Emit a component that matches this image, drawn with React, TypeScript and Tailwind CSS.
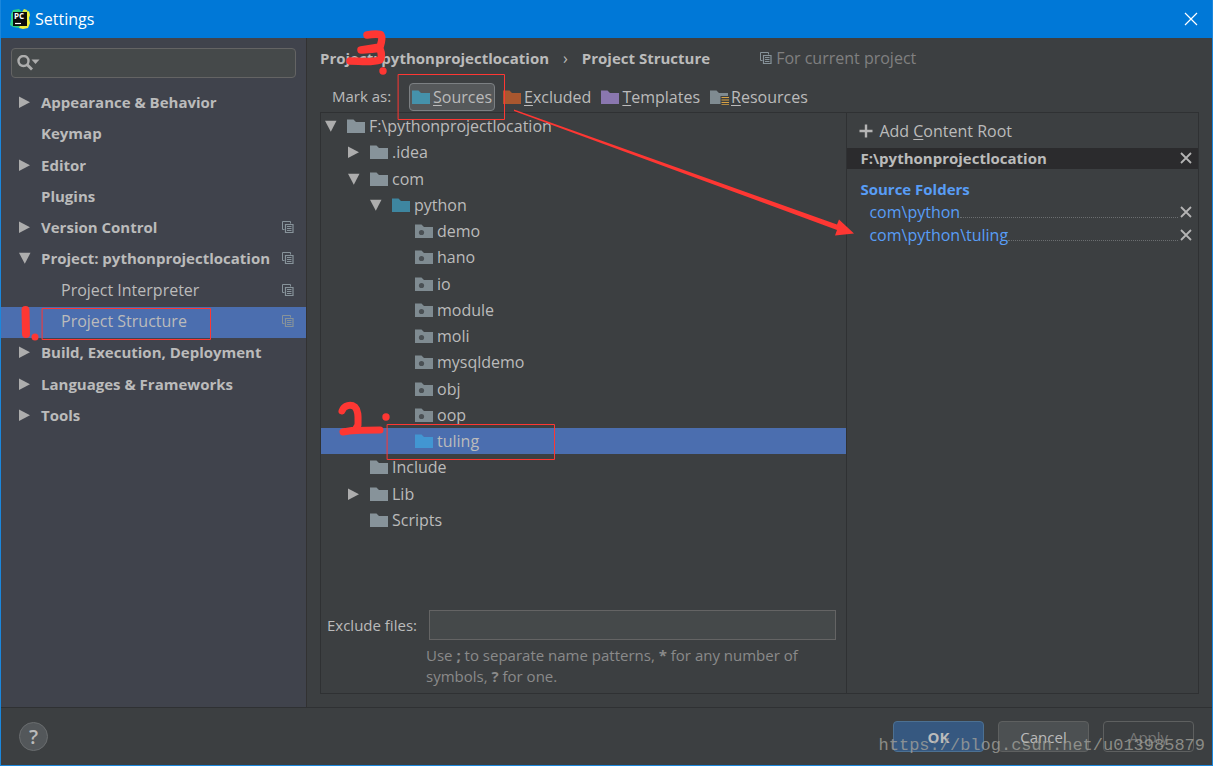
import React from "react";

const FONT = "font-['Open_Sans','Noto_Sans',sans-serif]";
const BOLD = "text-[15px] leading-5 font-bold";

function Arrow({ open }: { open: boolean }) {
  return (
    <svg viewBox="0 0 12 12" className="h-3 w-3 shrink-0" fill="#adadad" aria-hidden="true">
      {open ? <path d="M0 .8h11.500L5.800 11.800z" /> : <path d="M0 .5v11.500L11 6.300z" />}
    </svg>
  );
}

type FolderKind = "plain" | "source" | "selected" | "package" | "toolbar" | "excluded" | "template" | "resource";

const FOLDER_FILL: Record<FolderKind, string> = {
  plain: "#87939a",
  source: "#3e86a0",
  selected: "#4296d2",
  package: "#7f8b91",
  toolbar: "#4592ab",
  excluded: "#a9572f",
  template: "#8a77af",
  resource: "#7f8b91",
};

function Folder({ kind }: { kind: FolderKind }) {
  return (
    <svg viewBox="0 0 19 16" className="h-4 w-[19px] shrink-0" aria-hidden="true">
      <path d="M0 1.500h6.500l2.500 2.500h9v11H0z" fill={FOLDER_FILL[kind]} />
      {kind === "package" && <circle cx="6.500" cy="9.500" r="2.600" fill="#4a5054" />}
      {kind === "resource" && (
        <>
          <path d="M10.500 7H19v9h-8.500z" fill="#3c3f41" />
          <path d="M11.500 8.500H19M11.500 11H19M11.500 13.500H19M11.500 15.700H19" stroke="#d9a343" strokeWidth="1.100" />
        </>
      )}
    </svg>
  );
}

function CopyIcon() {
  return (
    <svg viewBox="0 0 12 12" className="h-3 w-3 shrink-0" fill="none" stroke="#87939a" aria-hidden="true">
      <path d="M2.500 8.500h-2v-8h8v2" />
      <path d="M3.500 3.500h7.500v8H3.500z" strokeWidth="1.200" />
      <path d="M5 5.500h4.500M5 7.500h4.500M5 9.500h4.500" />
    </svg>
  );
}

function CloseIcon() {
  return (
    <svg viewBox="0 0 12 12" className="h-3 w-3" stroke="#b4b4b4" strokeWidth="1.800" aria-hidden="true">
      <path d="M1 1l10 10M11 1L1 11" />
    </svg>
  );
}

function Logo() {
  return (
    <svg viewBox="0 0 20 20" className="h-5 w-5" aria-hidden="true">
      <path d="M1 5L3 1l6-1 3 3v14l-3 2-6-1-3-2 1-5z" fill="#2fd08a" />
      <path d="M10 17h5l2-14 2-1 1 4-1 3 1 5-2 5-5 1-4-1z" fill="#f0f03c" />
      <path d="M12 3h6l-1-2-3-1z" fill="#d4ee4a" />
      <path d="M3 3h14v14H3z" fill="#0c0c0c" />
      <text x="4" y="10" fontSize="8" fontWeight="700" fill="#fff" fontFamily="Open Sans">PC</text>
      <path d="M5 14.500h6" stroke="#fff" strokeWidth="1.200" />
    </svg>
  );
}

type NavItem = { label: string; state?: "open" | "closed"; child?: boolean; copy?: boolean; active?: boolean };

const NAV: NavItem[] = [
  { label: "Appearance & Behavior", state: "closed" },
  { label: "Keymap" },
  { label: "Editor", state: "closed" },
  { label: "Plugins" },
  { label: "Version Control", state: "closed", copy: true },
  { label: "Project: pythonprojectlocation", state: "open", copy: true },
  { label: "Project Interpreter", child: true, copy: true },
  { label: "Project Structure", child: true, copy: true, active: true },
  { label: "Build, Execution, Deployment", state: "closed" },
  { label: "Languages & Frameworks", state: "closed" },
  { label: "Tools", state: "closed" },
];

type TreeNode = { label: string; depth: 0 | 1 | 2 | 3; state?: "open" | "closed"; kind: FolderKind };

const TREE: TreeNode[] = [
  { label: "F:\\pythonprojectlocation", depth: 0, state: "open", kind: "plain" },
  { label: ".idea", depth: 1, state: "closed", kind: "plain" },
  { label: "com", depth: 1, state: "open", kind: "plain" },
  { label: "python", depth: 2, state: "open", kind: "source" },
  { label: "demo", depth: 3, kind: "package" },
  { label: "hano", depth: 3, kind: "package" },
  { label: "io", depth: 3, kind: "package" },
  { label: "module", depth: 3, kind: "package" },
  { label: "moli", depth: 3, kind: "package" },
  { label: "mysqldemo", depth: 3, kind: "package" },
  { label: "obj", depth: 3, kind: "package" },
  { label: "oop", depth: 3, kind: "package" },
  { label: "tuling", depth: 3, kind: "selected" },
  { label: "Include", depth: 1, kind: "plain" },
  { label: "Lib", depth: 1, state: "closed", kind: "plain" },
  { label: "Scripts", depth: 1, kind: "plain" },
];

const INDENT = ["pl-1", "pl-[27px]", "pl-[49px]", "pl-[72px]"];

function Mnemonic({ text }: { text: string }) {
  return (
    <span>
      <span className="underline underline-offset-2">{text[0]}</span>
      {text.slice(1)}
    </span>
  );
}

function Sidebar() {
  return (
    <aside className="flex w-[306px] shrink-0 flex-col border-r border-[#323232] bg-[#40434c]">
      <div className="mx-[10px] mt-[10px] flex h-[30px] items-center rounded border border-[#646464] bg-[#45494a] pl-[5px]">
        <svg viewBox="0 0 24 16" className="h-4 w-6 shrink-0" fill="none" aria-hidden="true">
          <circle cx="6.500" cy="6" r="5" stroke="#adadad" strokeWidth="2.400" />
          <path d="M10 9.500l5 5" stroke="#adadad" strokeWidth="2.800" />
          <path d="M14.500 4.500h8l-4 4.500z" fill="#adadad" />
        </svg>
        <input aria-label="Search settings" className="min-w-0 flex-1 bg-transparent px-1 outline-none" />
      </div>
      <nav className="mt-[10px] grid h-[344px] auto-rows-fr">
        {NAV.map((item) => (
          <a
            key={item.label}
            href="#"
            className={`flex items-center pb-[3px] pr-3 ${item.active ? "bg-[#4b6eaf]" : ""}`}
          >
            <span className={`flex shrink-0 pl-[18px] ${item.child ? "w-[60px]" : "w-10"}`}>
              {item.state && <Arrow open={item.state === "open"} />}
            </span>
            <span className={`flex-1 whitespace-nowrap ${item.child ? "" : BOLD}`}>{item.label}</span>
            {item.copy && <CopyIcon />}
          </a>
        ))}
      </nav>
    </aside>
  );
}

function Toolbar() {
  const rest: { label: string; kind: FolderKind }[] = [
    { label: "Excluded", kind: "excluded" },
    { label: "Templates", kind: "template" },
    { label: "Resources", kind: "resource" },
  ];
  return (
    <div className="flex h-[34px] items-end pl-3">
      <span className="w-[77px] whitespace-nowrap pb-[5px] text-[15px] leading-5">Mark as:</span>
      <button className="flex h-7 items-center gap-[2px] rounded border border-[#7c8083] bg-[#55585a] px-[2px]">
        <Folder kind="toolbar" />
        <Mnemonic text="Sources" />
      </button>
      <div className="ml-2 flex h-7 gap-[10px]">
        {rest.map((b) => (
          <button key={b.label} className="flex items-center gap-[2px]">
            <Folder kind={b.kind} />
            <Mnemonic text={b.label} />
          </button>
        ))}
      </div>
    </div>
  );
}

function TreePane() {
  return (
    <div className="flex min-w-0 flex-[526] flex-col border-r border-[#2f3133]">
      <div className="grid h-[420px] auto-rows-fr" role="tree">
        {TREE.map((n) => (
          <div
            key={n.label}
            role="treeitem"
            aria-selected={n.kind === "selected"}
            className={`flex items-center ${INDENT[n.depth]} ${n.kind === "selected" ? "bg-[#4b6eaf]" : ""}`}
          >
            <span className="flex w-[22px] shrink-0">{n.state && <Arrow open={n.state === "open"} />}</span>
            <Folder kind={n.kind} />
            <span className="pl-[3px]">{n.label}</span>
          </div>
        ))}
      </div>
      <div className="mt-auto pb-[6px] text-[15px] leading-5">
        <div className="flex items-center pl-[6px] pr-[10px]">
          <label htmlFor="exclude" className="w-[102px] whitespace-nowrap">Exclude files:</label>
          <input id="exclude" className="h-[30px] min-w-0 flex-1 border border-[#646464] bg-[#45494a] px-2 outline-none" />
        </div>
        <p className="mt-[5px] w-[510px] pl-[105px] leading-[21px] text-[#8a8a8a]">
          Use <b>;</b> to separate name patterns, <b>*</b> for any number of symbols, <b>?</b> for one.
        </p>
      </div>
    </div>
  );
}

function RootsPane() {
  return (
    <div className="min-w-0 flex-[351]">
      <button className="flex h-[35px] items-center gap-[6px] pl-3">
        <svg viewBox="0 0 14 14" className="h-[14px] w-[14px]" stroke="#b4b4b4" strokeWidth="2.400" aria-hidden="true">
          <path d="M7 .5v13M.5 7h13" />
        </svg>
        <span>
          Add <span className="underline underline-offset-2">C</span>ontent Root
        </span>
      </button>
      <div className="flex h-[21px] items-center justify-between bg-[#2b2b2d] pb-px pl-[13px] pr-[6px]">
        <span className={BOLD}>F:\pythonprojectlocation</span>
        <button aria-label="Remove content root"><CloseIcon /></button>
      </div>
      <div className="pl-[13px] pr-[6px] pt-[10px] text-[#589df6]">
        <h3 className={`h-[21px] ${BOLD}`}>Source Folders</h3>
        {["com\\python", "com\\python\\tuling"].map((path) => (
          <div key={path} className="flex h-[23px] items-center pl-[9px]">
            <a href="#">{path}</a>
            <span className="mr-[2px] mt-3 flex-1 border-b border-dotted border-[#6b6e70]" />
            <button aria-label={`Remove ${path}`}><CloseIcon /></button>
          </div>
        ))}
      </div>
    </div>
  );
}

function Annotations() {
  return (
    <svg
      viewBox="0 0 1213 766"
      className="pointer-events-none absolute -left-px top-0 h-[766px] w-[1213px]"
      fill="none"
      stroke="#fe3733"
      strokeLinecap="round"
      strokeLinejoin="round"
      aria-hidden="true"
    >
      <path d="M42.500 308.500h168v31h-168zM398.500 74.500h106v45h-106zM387.500 424.500h167v35h-167z" strokeLinejoin="miter" />
      <path d="M25.500 310l.5 24" strokeWidth="8" />
      <path d="M342 411c2-6 9-7 13-4 4 4 3 12 3 18l-3 5-12 2c8-2 28-2 37-2" strokeWidth="7" />
      <path d="M367 35c6-1 13-1 14 0 2 3 0 9-1 12l-19 3c8 0 17-2 19-1 2 5 2 8 0 11-9 3-20 1-30 1" strokeWidth="7.500" />
      <g fill="#fe3733" stroke="none">
        <circle cx="35" cy="337" r="3.500" />
        <circle cx="386" cy="417" r="3.700" />
        <circle cx="383" cy="71" r="3.700" />
        <path d="M514 109.500l323 115 2-5 15 14-19 2 2-5.500L514 111z" />
      </g>
    </svg>
  );
}

export default function App() {
  return (
    <div className={`relative flex min-h-screen flex-col overflow-hidden border border-t-0 border-[#1b87dc] bg-[#3c3f41] text-[16px] leading-5 text-[#bbbbbb] ${FONT}`}>
      <header className="flex h-[38px] shrink-0 items-center bg-[#0078d7] pl-[9px] pr-[14px] text-white">
        <Logo />
        <span className="ml-[5px] flex-1">Settings</span>
        <button aria-label="Close window">
          <svg viewBox="0 0 14 14" className="h-[14px] w-[14px]" stroke="#fff" strokeWidth="1.200" aria-hidden="true">
            <path d="M1 1l12 12M13 1L1 13" />
          </svg>
        </button>
      </header>

      <div className="flex flex-1">
        <Sidebar />
        <main className="flex min-w-0 flex-1 flex-col pb-[13px] pl-[13px] pr-[13px]">
          <div className="flex h-[39px] items-center whitespace-nowrap">
            <span className={BOLD}>Project: pythonprojectlocation</span>
            <span className="px-[14px]">›</span>
            <span className={BOLD}>Project Structure</span>
            <span className="ml-[50px] flex items-center gap-1 text-[#808080]">
              <CopyIcon />
              For current project
            </span>
          </div>
          <Toolbar />
          <section className="mt-px flex flex-1 border border-[#2f3133]">
            <TreePane />
            <RootsPane />
          </section>
        </main>
      </div>

      <footer className="flex h-[58px] shrink-0 items-center border-t border-[#2f3133] pl-[18px] pr-[18px] text-[15px]">
        <button aria-label="Help" className="h-[29px] w-[29px] rounded-full border border-[#6a6d6f] bg-[#53575a] text-xl font-semibold leading-6">?</button>
        <div className="ml-auto flex gap-[14px]">
          <button className={`h-[31px] w-[91px] rounded border border-[#4c7092] bg-[#365880] ${BOLD}`}>OK</button>
          <button className="h-[31px] w-[91px] rounded border border-[#5e6060] bg-[#4c5052]">Cancel</button>
          <button disabled className="h-[31px] w-[91px] rounded border border-[#5e6060] text-[#777777]">Apply</button>
        </div>
      </footer>

      <span className="pointer-events-none absolute bottom-[9px] right-[7px] font-['Liberation_Mono',monospace] text-[17px] text-[#a0a09a]/80">
        https://blog.csdn.net/u013985879
      </span>
      <Annotations />
    </div>
  );
}
